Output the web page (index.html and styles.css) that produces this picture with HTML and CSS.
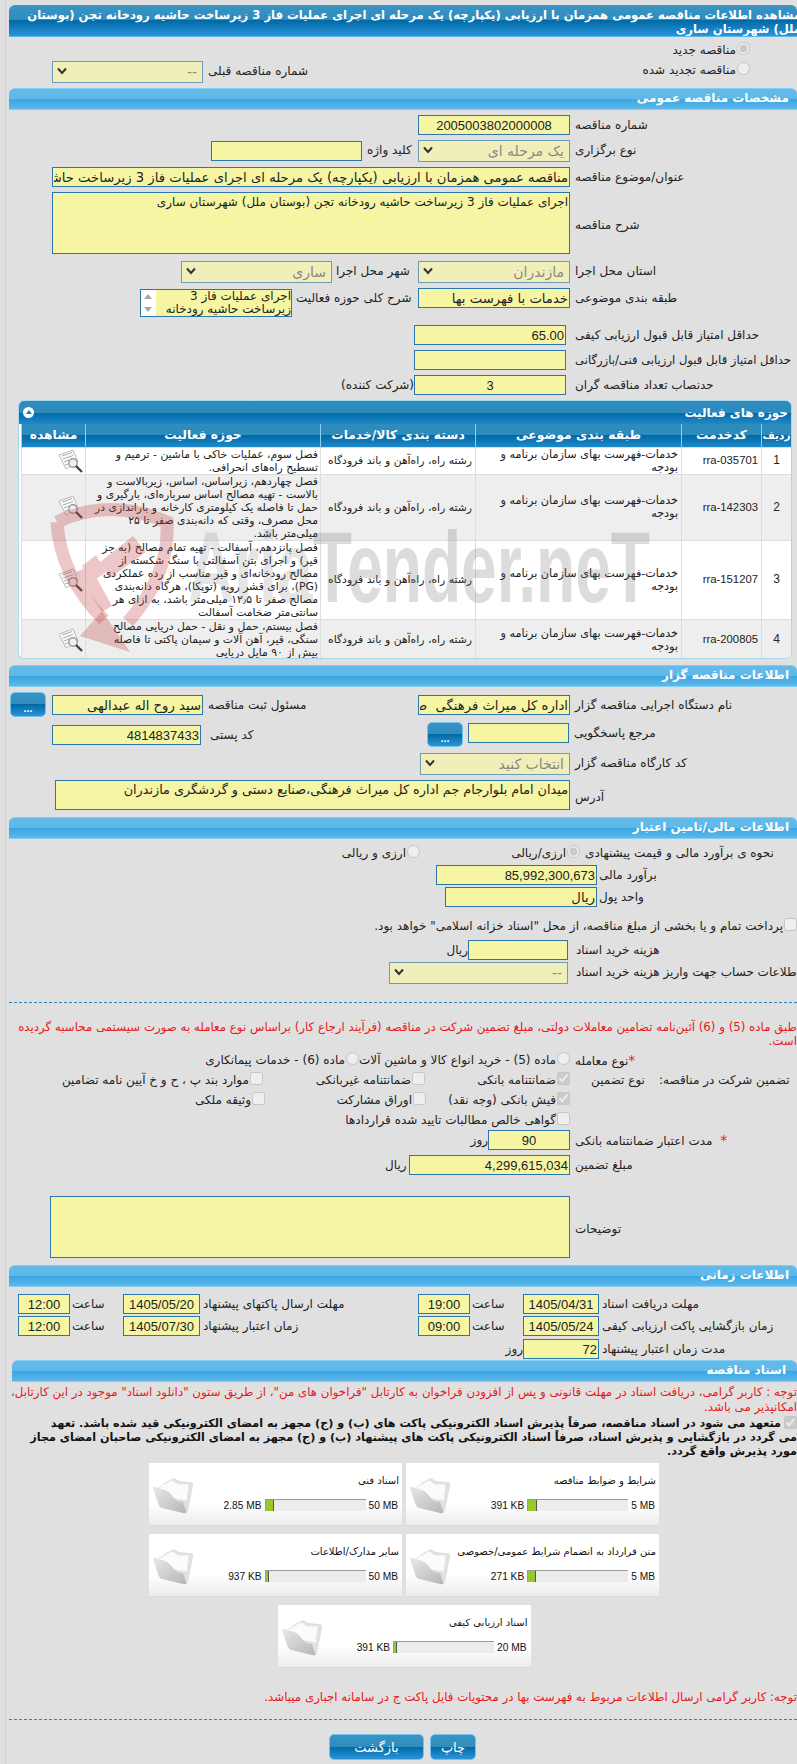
FILE: index.html
```html
<!DOCTYPE html>
<html lang="fa">
<head>
<meta charset="utf-8">
<title>مشاهده اطلاعات مناقصه</title>
<link rel="stylesheet" href="styles.css">
</head>
<body>
<svg class="defs" width="0" height="0">
  <defs>
    <linearGradient id="fg" x1="0" y1="0" x2="1" y2="1"><stop offset="0" stop-color="#e8e8e8"/><stop offset="1" stop-color="#b6b6b6"/></linearGradient>
    <symbol id="chev" viewBox="0 0 10 8"><path d="M1 1.5 5 6 9 1.5" fill="none" stroke="#333" stroke-width="2"/></symbol>
    <symbol id="doc" viewBox="0 0 25 24">
      <path d="M1 6 15 1 20 13 8 20Z" fill="#fafafa" stroke="#bbb"/>
      <path d="M4 7 14 3.5M5 10 15 6.5M6 13 11 11M7 16 10 15" stroke="#aaa"/>
      <circle cx="15" cy="14" r="4.2" fill="#eef2f2" stroke="#999" stroke-width="1.4"/>
      <path d="M18 17 24 23" stroke="#444" stroke-width="2.4"/>
    </symbol>
    <symbol id="folder" viewBox="0 0 42 37">
      <path d="M12 6 22 1 27 4 38 5Q42 5 41 9L36 34Q35 37 32 36L10 28Z" fill="#e0e0e0"/>
      <path d="M6 11 20 3 26 7 37 7 35 24 14 20Z" fill="#fbfbfb" stroke="#e6e6e6"/>
      <path d="M1 11Q0 9 3 10L13 13Q18 15 21 20 24 25 31 25L34 34Q35 37 31 36L10 31Q7 30 6 26Z" fill="url(#fg)"/>
    </symbol>
  </defs>
</svg>
<div class="page">
  <div class="content">
    <h1 class="title"><span>مشاهده اطلاعات مناقصه عمومی همزمان با ارزیابی (یکپارچه) یک مرحله ای اجرای عملیات فاز 3 زیرساخت حاشیه رودخانه تجن (بوستان<br>ملل) شهرستان ساری</span></h1>

    <div class="row rtl h16 mt4"><label class="opt mr47"><input type="radio" name="t" checked disabled><span>مناقصه جدید</span></label></div>
    <div class="row h22 mt4">
      <div class="sel ml43 w151 dis"><svg><use href="#chev"/></svg><span>--</span></div>
      <span class="lab ml5">شماره مناقصه قبلی</span>
      <label class="opt end mr47"><input type="radio" name="t" disabled><span>مناقصه تجدید شده</span></label>
    </div>

    <h2 class="sec mt5">مشخصات مناقصه عمومی</h2>
    <div class="row mt5"><div class="side"></div><input class="fld main num ctr" dir="ltr" readonly value="2005003802000008"><span class="lab ml5">شماره مناقصه</span></div>
    <div class="row h22 mt5">
      <div class="side"><input class="fld ml202 w151 mt1" readonly><span class="lab w51 ml5">کلید واژه</span></div>
      <div class="sel main dis"><svg><use href="#chev"/></svg><span>یک مرحله ای</span></div><span class="lab ml5">نوع برگزاری</span>
    </div>
    <div class="row mt5"><input class="fld ml43 w518" readonly value="مناقصه عمومی همزمان با ارزیابی (یکپارچه) یک مرحله ای اجرای عملیات فاز 3 زیرساخت حاشیه رودخانه تجن (بوستان ملل) شهرستان ساری"><span class="lab ml5">عنوان/موضوع مناقصه</span></div>
    <div class="row h62 mt5"><textarea class="fld area ml43 w518 h62" readonly>اجرای عملیات فاز 3 زیرساخت حاشیه رودخانه تجن (بوستان ملل) شهرستان ساری</textarea><span class="lab ml5 vmid">شرح مناقصه</span></div>
    <div class="row h22 mt7">
      <div class="side"><div class="sel ml172 w151 dis"><svg><use href="#chev"/></svg><span>ساری</span></div><span class="lab ml4">شهر محل اجرا</span></div>
      <div class="sel main dis"><svg><use href="#chev"/></svg><span>مازندران</span></div><span class="lab ml5">استان محل اجرا</span>
    </div>
    <div class="row h29 mt5">
      <div class="side">
        <div class="list ml131 mt1"><div class="bar"><i class="up"></i><i class="dn"></i></div><div class="ltext">اجرای عملیات فاز 3 زیرساخت حاشیه رودخانه</div></div>
        <span class="lab ml4">شرح کلی حوزه فعالیت</span>
      </div>
      <input class="fld main" readonly value="خدمات با فهرست بها"><span class="lab ml5">طبقه بندی موضوعی</span>
    </div>
    <div class="row mt8"><input class="fld ml405 w152 num" dir="ltr" readonly value="65.00"><span class="lab ml9">حداقل امتیاز قابل قبول ارزیابی کیفی</span></div>
    <div class="row mt5"><input class="fld ml405 w152" readonly><span class="lab ml9 tight">حداقل امتیاز قابل قبول ارزیابی فنی/بازرگانی</span></div>
    <div class="row mt5"><span class="lab ml329 w76 txtr">(شرکت کننده)</span><input class="fld w152 num ctr" dir="ltr" readonly value="3"><span class="lab ml9">حدنصاب تعداد مناقصه گران</span></div>

    <section class="panel mt5">
      <div class="phead"><span>حوزه های فعالیت</span><b class="toggle"></b></div>
      <table class="grid">
        <colgroup><col class="c1"><col class="c2"><col class="c3"><col class="c4"><col class="c5"><col class="c6"></colgroup>
        <thead><tr><th>ردیف</th><th>کدخدمت</th><th>طبقه بندی موضوعی</th><th>دسته بندی کالا/خدمات</th><th>حوزه فعالیت</th><th>مشاهده</th></tr></thead>
        <tbody>
          <tr class="r1"><td class="ctr num">1</td><td class="code">rra-035701</td><td>خدمات-فهرست بهای سازمان برنامه و بودجه</td><td class="cat">رشته راه، راه‌آهن و باند فرودگاه</td><td class="desc">فصل سوم، عملیات خاکی با ماشین - ترمیم و<br>تسطیح راه‌های انحرافی.</td><td class="ico"><svg class="doc"><use href="#doc"/></svg></td></tr>
          <tr class="r2 alt"><td class="ctr num">2</td><td class="code">rra-142303</td><td>خدمات-فهرست بهای سازمان برنامه و بودجه</td><td class="cat">رشته راه، راه‌آهن و باند فرودگاه</td><td class="desc">فصل چهاردهم، زیراساس، اساس، زیربالاست  و<br>بالاست - تهیه مصالح اساس سرباره‌ای، بارگیری و<br>حمل تا فاصله یک کیلومتری کارخانه و باراندازی در<br>محل مصرف، وقتی که دانه‌بندی صفر تا ۲۵<br>میلی‌متر باشد.</td><td class="ico"><svg class="doc"><use href="#doc"/></svg></td></tr>
          <tr class="r3"><td class="ctr num">3</td><td class="code">rra-151207</td><td>خدمات-فهرست بهای سازمان برنامه و بودجه</td><td class="cat">رشته راه، راه‌آهن و باند فرودگاه</td><td class="desc">فصل پانزدهم، آسفالت - تهیه تمام مصالح (به جز<br>قیر) و اجرای بتن آسفالتی با سنگ شکسته از<br>مصالح رودخانه‌ای و قیر مناسب از رده عملکردی<br>(PG)، برای قشر رویه (توپکا)، هرگاه دانه‌بندی<br>مصالح صفر تا ۱۲٫۵ میلی‌متر باشد، به ازای هر<br>سانتی‌متر ضخامت آسفالت</td><td class="ico"><svg class="doc"><use href="#doc"/></svg></td></tr>
          <tr class="r4 alt"><td class="ctr num">4</td><td class="code">rra-200805</td><td>خدمات-فهرست بهای سازمان برنامه و بودجه</td><td class="cat">رشته راه، راه‌آهن و باند فرودگاه</td><td class="desc">فصل بیستم، حمل و نقل - حمل دریایی مصالح<br>سنگی،  قیر، آهن آلات و سیمان پاکتی تا فاصله<br>بیش از ۹۰ مایل دریایی</td><td class="ico"><svg class="doc"><use href="#doc"/></svg></td></tr>
        </tbody>
      </table>
      <svg class="mark" viewBox="40 495 640 170">
        <path class="shield" d="M57 522Q110 497 167 522 170 575 128 622M57 522Q60 575 104 620"/>
        <path class="shield-fill" d="M133 536 146 552 110 578 100 562ZM96 555 106 572 92 582 82 566ZM76 572 90 566 112 606 102 612ZM102 611 80 636 130 652Z"/>
        <text class="brand" x="188" y="602" textLength="462" lengthAdjust="spacingAndGlyphs"><tspan class="faint">Aria</tspan>Tender.neT</text>
      </svg>
    </section>

    <h2 class="sec mt6">اطلاعات مناقصه گزار</h2>
    <div class="row h25 mt5">
      <div class="side">
        <button class="btn dots ml1">...</button>
        <input class="fld ml6 w151 mt3" readonly value="سید روح اله عبدالهی">
        <span class="lab ml5 mt3">مسئول ثبت مناقصه</span>
      </div>
      <input class="fld main mt3" readonly value="اداره کل میراث فرهنگی  صنایع دستی و گردشگری"><span class="lab ml5 mt3">نام دستگاه اجرایی مناقصه گزار</span>
    </div>
    <div class="row h26 mt5">
      <div class="side">
        <input class="fld ml43 w149 mt3 num" dir="ltr" readonly value="4814837433">
        <span class="lab ml9 mt3 w217">کد پستی</span>
        <button class="btn dots">...</button>
      </div>
      <input class="fld w101 ml50 mt1" readonly>
      <span class="lab ml5 mt1">مرجع پاسخگویی</span>
    </div>
    <div class="row h22 mt5"><div class="sel ml411 w150 dis"><svg><use href="#chev"/></svg><span>انتخاب کنید</span></div><span class="lab ml5">کد کارگاه مناقصه گزار</span></div>
    <div class="row h30 mt5"><textarea class="fld area addr ml46 w515 h30" readonly>میدان امام بلوارجام جم اداره کل میراث فرهنگی،صنایع دستی و گردشگری مازندران</textarea><span class="lab ml5 vmid2">آدرس</span></div>

    <h2 class="sec mt7">اطلاعات مالی/تامین اعتبار</h2>
    <div class="row h16 mt5">
      <label class="opt ml301 w110"><input type="radio" name="c" disabled><span>ارزی و ریالی</span></label>
      <label class="opt ml8 w152"><input type="radio" name="c" checked disabled><span>ارزی/ریالی</span></label>
      <span class="lab ml5 lh16">نحوه ی برآورد مالی و قیمت پیشنهادی</span>
    </div>
    <div class="row mt5"><input class="fld ml427 w161 num" dir="ltr" readonly value="85,992,300,673"><span class="lab ml2">برآورد مالی</span></div>
    <div class="row mt2"><input class="fld ml436 w152" readonly value="ریال"><span class="lab ml2">واحد پول</span></div>
    <div class="row rtl h16 mt10"><label class="opt"><input type="checkbox" disabled><span>پرداخت تمام و یا بخشی از مبلغ مناقصه، از محل "اسناد خزانه اسلامی" خواهد بود.</span></label></div>
    <div class="row mt7"><span class="lab ml439 w20">ریال</span><input class="fld w100" readonly><span class="lab ml8">هزینه خرید اسناد</span></div>
    <div class="row h22 mt2"><div class="sel ml380 w179 dis"><svg><use href="#chev"/></svg><span>--</span></div><span class="lab ml8">اطلاعات حساب جهت واریز هزینه خرید اسناد</span></div>

    <hr class="dash mt18">
    <p class="note mt17">طبق ماده (5) و (6) آئین‌نامه تضامین معاملات دولتی، مبلغ تضمین شرکت در مناقصه (فرآیند ارجاع کار) براساس نوع معامله به صورت سیستمی محاسبه گردیده<br>است.</p>
    <div class="row h16 mt3">
      <label class="opt ml190 w160"><input type="radio" name="m" disabled><span>ماده (6) - خدمات پیمانکاری</span></label>
      <label class="opt w211"><input type="radio" name="m" disabled><span>ماده (5) - خرید انواع کالا و ماشین آلات</span></label>
      <span class="lab ml5 lh16"><em class="star">*</em>نوع معامله</span>
    </div>
    <div class="row h16 mt4">
      <label class="opt ml40 w214"><input type="checkbox" disabled><span>موارد بند پ ، ح و خ آیین نامه تضامین</span></label>
      <label class="opt w162"><input type="checkbox" disabled><span>ضمانتنامه غیربانکی</span></label>
      <label class="opt w145"><input type="checkbox" checked disabled><span>ضمانتنامه بانکی</span></label>
      <span class="lab ml21 w68 lh16">نوع تضمین</span>
      <span class="lab lh16">تضمین شرکت در مناقصه:</span>
    </div>
    <div class="row h16 mt4">
      <label class="opt ml40 w216"><input type="checkbox" disabled><span>وثیقه ملکی</span></label>
      <label class="opt w161"><input type="checkbox" disabled><span>اوراق مشارکت</span></label>
      <label class="opt w144"><input type="checkbox" checked disabled><span>فیش بانکی (وجه نقد)</span></label>
    </div>
    <div class="row h16 mt4"><label class="opt ml200 w361"><input type="checkbox" disabled><span>گواهی خالص مطالبات تایید شده قراردادها</span></label></div>
    <div class="row mt3"><span class="lab ml462 w17">روز</span><input class="fld w82 num ctr" dir="ltr" readonly value="90"><span class="lab ml5"><em class="star">*</em>&nbsp; مدت اعتبار ضمانتنامه بانکی</span></div>
    <div class="row mt5"><span class="lab ml376 w24">ریال</span><input class="fld w161 num" dir="ltr" readonly value="4,299,615,034"><span class="lab ml5">مبلغ تضمین</span></div>
    <div class="row h62 mt21"><textarea class="fld area ml41 w520 h62" readonly></textarea><span class="lab ml5 vmid">توضیحات</span></div>

    <h2 class="sec mt7">اطلاعات زمانی</h2>
    <div class="row mt7">
      <input class="fld ml9 w52 num ctr" dir="ltr" readonly value="12:00"><span class="lab ml2 w50">ساعت</span>
      <input class="fld ml1 w77 num ctr" dir="ltr" readonly value="1405/05/20"><span class="lab ml3 w215">مهلت ارسال پاکتهای پیشنهاد</span>
      <input class="fld w52 num ctr" dir="ltr" readonly value="19:00"><span class="lab ml2 w51">ساعت</span>
      <input class="fld w76 num ctr" dir="ltr" readonly value="1405/04/31"><span class="lab ml3">مهلت دریافت اسناد</span>
    </div>
    <div class="row mt2">
      <input class="fld ml9 w52 num ctr" dir="ltr" readonly value="12:00"><span class="lab ml2 w50">ساعت</span>
      <input class="fld ml1 w77 num ctr" dir="ltr" readonly value="1405/07/30"><span class="lab ml3 w215">زمان اعتبار پیشنهاد</span>
      <input class="fld w52 num ctr" dir="ltr" readonly value="09:00"><span class="lab ml2 w51">ساعت</span>
      <input class="fld w76 num ctr" dir="ltr" readonly value="1405/05/24"><span class="lab ml3">زمان بازگشایی پاکت ارزیابی کیفی</span>
    </div>
    <div class="row mt3"><span class="lab ml497 w17">روز</span><input class="fld w76 num" dir="ltr" readonly value="72"><span class="lab ml3">مدت زمان اعتبار پیشنهاد</span></div>

    <h2 class="sec sec-doc mt1">اسناد مناقصه</h2>
    <p class="note lh15 mt3">توجه : کاربر گرامی، دریافت اسناد در مهلت قانونی و پس از افزودن فراخوان به کارتابل "فراخوان های من"، از طریق ستون "دانلود اسناد" موجود در این کارتابل،<br>امکانپذیر می باشد.</p>
    <p class="pledge mt1"><input type="checkbox" checked disabled>متعهد می شود در اسناد مناقصه، صرفاً پذیرش اسناد الکترونیکی پاکت های (ب) و (ج) مجهز به امضای الکترونیکی قید شده باشد. تعهد<br>می گردد در بازگشایی و پذیرش اسناد، صرفاً اسناد الکترونیکی پاکت های پیشنهاد (ب) و (ج) مجهز به امضای الکترونیکی صاحبان امضای مجاز<br>مورد پذیرش واقع گردد.</p>

    <div class="cards mt4">
      <div class="card"><svg class="folder"><use href="#folder"/></svg><div class="cbody"><div class="ctitle">شرایط و ضوابط مناقصه</div><div class="cmeter"><span>5 MB</span><div class="meter"><i style="width:9px"></i></div><span>391 KB</span></div></div></div>
      <div class="card"><svg class="folder"><use href="#folder"/></svg><div class="cbody"><div class="ctitle">اسناد فنی</div><div class="cmeter"><span>50 MB</span><div class="meter"><i style="width:8px"></i></div><span>2.85 MB</span></div></div></div>
      <div class="card"><svg class="folder"><use href="#folder"/></svg><div class="cbody"><div class="ctitle">متن قرارداد به انضمام شرایط عمومی/خصوصی</div><div class="cmeter"><span>5 MB</span><div class="meter"><i style="width:8px"></i></div><span>271 KB</span></div></div></div>
      <div class="card"><svg class="folder"><use href="#folder"/></svg><div class="cbody"><div class="ctitle">سایر مدارک/اطلاعات</div><div class="cmeter"><span>50 MB</span><div class="meter"><i style="width:3px"></i></div><span>937 KB</span></div></div></div>
      <div class="card"><svg class="folder"><use href="#folder"/></svg><div class="cbody"><div class="ctitle">اسناد ارزیابی کیفی</div><div class="cmeter"><span>20 MB</span><div class="meter"><i style="width:3px"></i></div><span>391 KB</span></div></div></div>
    </div>

    <p class="note mt22">توجه: کاربر گرامی ارسال اطلاعات مربوط به فهرست بها در محتویات فایل پاکت ج در سامانه اجباری میباشد.</p>
    <hr class="dash mt15">
    <div class="actions mt14">
      <button class="btn act w95">بازگشت</button>
      <button class="btn act w46">چاپ</button>
    </div>
  </div>
</div>
</body>
</html>
```
FILE: styles.css
```css
* { box-sizing: border-box; }
html, body { margin: 0; padding: 0; }
body { background: #e0e0e0; font: 12px "DejaVu Sans", sans-serif; color: #222; height: 1764px; overflow: hidden; }
.defs { position: absolute; }
.page { width: 792px; height: 1764px; margin-left: 5px; border-left: 1px solid #cfcfcf; padding: 5px 0 0 3px; overflow: hidden; }
.content { width: 788px; }

.title { margin: 0; width: 788px; height: 32px; overflow: hidden; direction: rtl; text-align: right; white-space: nowrap;
  padding: 3px 0 0; font: 700 11.6px/14px "DejaVu Sans", sans-serif; color: #fff;
  border-radius: 6px 6px 0 0; border-bottom: 1px solid #5cb8ea;
  background: linear-gradient(#3a94c3 0, #2f8cbd 50%, #006aa8 50%, #2c94d8 100%); }
.title span { display: block; margin-right: -4px; }
.sec { margin: 0; height: 22px; direction: rtl; padding: 0 8px 0 0; font: 700 12px/19px "DejaVu Sans", sans-serif; color: #fff;
  border-radius: 6px 6px 0 0; border-bottom: 1px solid #7fd0f2; border-top: 1px solid #7fcdf2;
  background: linear-gradient(#64bbea 0, #60b8e8 50%, #38a6e2 50%, #5fb7ea 100%); }
.sec-doc { margin-left: 3px; padding-right: 11px; }

.row { display: flex; direction: ltr; align-items: flex-start; height: 20px; }
.rtl { direction: rtl; }
.side { flex: none; width: 409px; display: flex; align-items: flex-start; }
.main { flex: none; width: 152px; }
.lab { flex: none; direction: rtl; text-align: left; white-space: nowrap; line-height: 21px; }
.lab.lh16 { line-height: 18px; }
.tight { font-size: 11.6px; }
.txtr { text-align: right; }
.vmid { line-height: 66px; }
.vmid2 { line-height: 34px; }

.fld { display: block; flex: none; height: 20px; padding: 0 1px; direction: rtl; background: #f6f5a3; color: #222;
  border: 1px solid #2a78ab; border-radius: 0; outline: 0; font: 13.2px "DejaVu Sans", sans-serif; }
.num { font-family: "Liberation Sans", sans-serif; font-size: 13px; }
input.num[dir=ltr] { direction: ltr; text-align: right; }
input.num.ctr[dir=ltr] { text-align: center; }
.area { resize: none; overflow: hidden; font-size: 12px; line-height: 14px; padding: 2px 1px; }
.addr { font-size: 12.8px; }
.sel { flex: none; display: flex; justify-content: space-between; align-items: center; height: 22px; padding: 0 5px 0 4px;
  direction: ltr; background: #f1efb9; border: 1px solid #6d9db5; font: 14px "DejaVu Sans", sans-serif; color: #888; }
.sel svg { width: 10px; height: 8px; margin-top: -3px; }
.sel span { direction: rtl; margin-top: -1px; }
.list { flex: none; width: 152px; height: 28px; display: flex; border: 1px solid #2a78ab; background: #f6f5a3; overflow: hidden; direction: ltr; }
.bar { flex: none; width: 15px; background: #fff; position: relative; }
.bar i { position: absolute; left: 3px; width: 0; height: 0; border-left: 4.5px solid transparent; border-right: 4.5px solid transparent; }
.up { top: 4px; border-bottom: 5px solid #a8a8a8; }
.dn { bottom: 4px; border-top: 5px solid #a8a8a8; }
.ltext { flex: 1; direction: rtl; font: 12px/13px "DejaVu Sans", sans-serif; color: #222; }

.opt { display: flex; direction: rtl; flex: none; align-items: flex-start; height: 16px; white-space: nowrap; font: 12px/18px "DejaVu Sans", sans-serif; }
.opt input { flex: none; width: 13px; height: 13px; margin: 1px 0 0 1px; }
.end { margin-left: auto; }
.star { color: #e8181c; font-style: normal; font-size: 14px; }

.panel { position: relative; width: 774px; height: 259px; margin-left: 9px; overflow: hidden; border: 1px solid #a9d8ee; border-radius: 6px; background: #fff; padding: 0 0 0 2px; }
.phead { display: flex; justify-content: space-between; direction: rtl; align-items: center; height: 23px; margin-left: -2px; padding: 0 3px 0 4px; color: #fff; font: 700 12px "DejaVu Sans", sans-serif;
  background: linear-gradient(#2f8cbd 0, #2d8bbd 50%, #006aa8 50%, #1f88c8 100%); }
.toggle { width: 11px; height: 11px; border-radius: 50%; background: #fff; position: relative; }
.toggle::after { content: ""; position: absolute; left: 2.5px; top: 3px; border-left: 3px solid transparent; border-right: 3px solid transparent; border-bottom: 4px solid #1a7fb8; }
.grid { direction: rtl; width: 770px; table-layout: fixed; border-collapse: collapse; font: 11.2px/13px "DejaVu Sans", sans-serif; color: #222; }
.c1 { width: 30px; } .c2 { width: 80px; } .c3 { width: 206px; } .c4 { width: 155px; } .c5 { width: 235px; } .c6 { width: 64px; }
.grid th { height: 23px; padding: 0; color: #fff; font: 700 12.3px "DejaVu Sans", sans-serif; border-left: 1px solid #8dcfee; border-right: 1px solid #8dcfee;
  background: linear-gradient(#2f8cbd 0, #2d8bbd 50%, #006aa8 50%, #1f88c8 100%); }
.grid th:first-child { font-size: 10.5px; }
.grid td { padding: 0 3px; border: 1px solid #ddd; vertical-align: middle; text-align: right; }
.grid td.num { font-size: 12px; text-align: center; }
.grid td.code { font-family: "Liberation Sans", sans-serif; direction: ltr; font-size: 11.3px; padding-right: 3px; }
.cat { white-space: nowrap; font-size: 10.8px; }
.grid td.desc { white-space: nowrap; font-size: 10.8px; padding-right: 2px; }
.r1 td { height: 26px; } .r2 td { height: 66px; } .r3 td { height: 79px; } .r4 td { height: 41px; }
.alt td { background: #eee; }
.grid td.ico { text-align: right; padding: 0 2px 0 0; }
.doc { display: inline-block; width: 25px; height: 24px; vertical-align: middle; }
.mark { position: absolute; left: 21px; top: 94px; width: 640px; height: 170px; pointer-events: none; }
.shield { fill: none; stroke: rgba(196, 70, 70, .3); stroke-width: 13; }
.shield-fill { fill: rgba(196, 70, 70, .3); }
.brand { font: 700 100px "Liberation Sans", sans-serif; fill: rgba(110, 110, 110, .24); }
.faint { fill: rgba(110, 110, 110, .18); }

.btn { flex: none; display: block; width: 36px; height: 25px; padding: 0; color: #fff; border: 1px solid #6fc4ec; border-radius: 5px;
  background: linear-gradient(#3a94c3 0, #2f8cbd 50%, #006aa8 50%, #2c94d8 100%); font: 700 11px "Liberation Sans", sans-serif; }
.dots { line-height: 30px; }
.act { height: 26px; font: 13px "DejaVu Sans", sans-serif; }

.dash { display: block; height: 0; margin-bottom: 0; margin-left: 0; margin-right: 0; border: 0; border-top: 1px dashed #2a85b8; }
.note { margin: 0; direction: rtl; color: #e8181c; font: 11.8px/14px "DejaVu Sans", sans-serif; width: 788px; white-space: nowrap; }
.note.lh15 { line-height: 15px; }
.pledge { margin: 0; direction: rtl; width: 788px; white-space: nowrap; font: 700 11.2px/14px "DejaVu Sans", sans-serif; color: #111; }
.pledge input { width: 13px; height: 13px; margin: 0 0 0 3px; vertical-align: -2px; }

.cards { display: flex; flex-wrap: wrap; justify-content: center; gap: 8px 4px; width: 520px; margin-left: 135px; direction: rtl; }
.card { flex: none; display: flex; direction: ltr; width: 253px; height: 63px; padding: 0 3px; background: linear-gradient(#fff 0, #fff 65%, #ececec 100%); border-bottom: 1px solid #d8d8d8; }
.folder { flex: none; width: 42px; height: 37px; margin-top: 14px; }
.cbody { flex: 1; }
.ctitle { direction: rtl; margin-top: 11px; font: 10px/14px "DejaVu Sans", sans-serif; color: #111; white-space: nowrap; }
.cmeter { display: flex; direction: rtl; align-items: center; margin-top: 11px; padding-right: 1px; font: 10.2px "Liberation Sans", sans-serif; color: #111; }
.cmeter span { direction: ltr; }
.meter { width: 101px; height: 12px; margin: 0 3px; background: #ececec; border-top: 1px solid #999; border-left: 1px solid #999; direction: ltr; }
.meter i { display: block; height: 11px; background: #97c92c; border-right: 1px solid #555; }

.actions { display: flex; direction: ltr; gap: 6px; margin-left: 320px; }

.h16 { height: 16px; } .h22 { height: 22px; } .h25 { height: 25px; } .h26 { height: 26px; } .h29 { height: 29px; } .h30 { height: 30px; } .h62 { height: 62px; }
.mt1 { margin-top: 1px; } .mt2 { margin-top: 2px; } .mt3 { margin-top: 3px; } .mt4 { margin-top: 4px; } .mt5 { margin-top: 5px; } .mt6 { margin-top: 6px; } .mt7 { margin-top: 7px; } .mt8 { margin-top: 8px; } .mt10 { margin-top: 10px; } .mt14 { margin-top: 14px; } .mt15 { margin-top: 15px; } .mt17 { margin-top: 17px; } .mt18 { margin-top: 18px; } .mt21 { margin-top: 21px; } .mt22 { margin-top: 22px; }
.mr47 { margin-right: 47px; }
.ml1 { margin-left: 1px; } .ml2 { margin-left: 2px; } .ml3 { margin-left: 3px; } .ml4 { margin-left: 4px; } .ml5 { margin-left: 5px; } .ml6 { margin-left: 6px; } .ml8 { margin-left: 8px; } .ml9 { margin-left: 9px; } .ml21 { margin-left: 21px; } .ml40 { margin-left: 40px; } .ml41 { margin-left: 41px; } .ml43 { margin-left: 43px; } .ml46 { margin-left: 46px; } .ml50 { margin-left: 50px; } .ml131 { margin-left: 131px; } .ml172 { margin-left: 172px; } .ml190 { margin-left: 190px; } .ml200 { margin-left: 200px; } .ml202 { margin-left: 202px; } .ml301 { margin-left: 301px; } .ml329 { margin-left: 329px; } .ml376 { margin-left: 376px; } .ml380 { margin-left: 380px; } .ml405 { margin-left: 405px; } .ml411 { margin-left: 411px; } .ml427 { margin-left: 427px; } .ml436 { margin-left: 436px; } .ml439 { margin-left: 439px; } .ml462 { margin-left: 462px; } .ml497 { margin-left: 497px; }
.w17 { width: 17px; } .w20 { width: 20px; } .w24 { width: 24px; } .w46 { width: 46px; } .w50 { width: 50px; } .w51 { width: 51px; } .w52 { width: 52px; } .w68 { width: 68px; } .w76 { width: 76px; } .w77 { width: 77px; } .w82 { width: 82px; } .w95 { width: 95px; } .w100 { width: 100px; } .w101 { width: 101px; } .w110 { width: 110px; } .w144 { width: 144px; } .w145 { width: 145px; } .w149 { width: 149px; } .w150 { width: 150px; } .w151 { width: 151px; } .w152 { width: 152px; } .w160 { width: 160px; } .w161 { width: 161px; } .w162 { width: 162px; } .w179 { width: 179px; } .w211 { width: 211px; } .w214 { width: 214px; } .w215 { width: 215px; } .w216 { width: 216px; } .w217 { width: 217px; } .w361 { width: 361px; } .w515 { width: 515px; } .w518 { width: 518px; } .w520 { width: 520px; }
```
